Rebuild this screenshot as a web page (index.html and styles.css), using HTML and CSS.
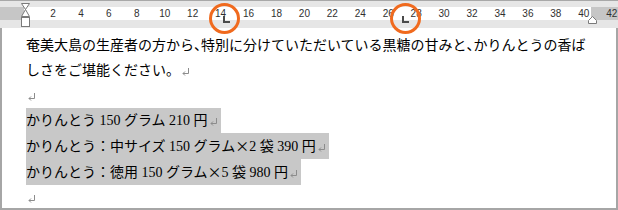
FILE: index.html
```html
<!DOCTYPE html>
<html lang="ja">
<head>
<meta charset="utf-8">
<title>かりんとう</title>
<link rel="stylesheet" href="styles.css">
</head>
<body>
<div class="ruler">
  <div class="ruler-top"></div>
  <div class="ruler-scale">
    <span>2</span><span>4</span><span>6</span><span>8</span><span>10</span><span>12</span><span>14</span><span>16</span><span>18</span><span>20</span><span>22</span><span>24</span><span>26</span><span>28</span><span>30</span><span>32</span><span>34</span><span>36</span><span>38</span><span>40</span><span>42</span>
  </div>
  <div class="ruler-bottom"></div>
  <svg class="indent-left" width="11" height="25" viewBox="0 0 11 25">
    <path d="M1.5 0.5 H9.5 L5.5 6.5 Z M5.5 6.5 L9.5 13.5 H1.5 Z" fill="#fff" stroke="#7a7a7a"/>
    <rect x="1.5" y="14.5" width="8" height="9" fill="#fff" stroke="#7a7a7a"/>
  </svg>
  <svg class="indent-right" width="11" height="8" viewBox="0 0 11 8">
    <path d="M1.5 7.5 V4.5 L5.5 0.5 L9.5 4.5 V7.5 Z" fill="#fff" stroke="#7a7a7a"/>
  </svg>
  <span class="tab tab-1"></span>
  <span class="tab tab-2"></span>
  <span class="callout callout-1"></span>
  <span class="callout callout-2"></span>
</div>
<div class="page">
  <p>奄美大島の生産者の方から<span class="half">、</span>特別に分けていただいている黒糖の甘みと<span class="half">、</span>かりんとうの香ば<br>しさをご堪能ください。<svg class="pm" width="8" height="8" viewBox="0 0 8 8"><path d="M6.5 0 V5.5 H1 M3 3.5 L1 5.5 L3 7.5" fill="none" stroke="#8c8c8c"/></svg></p>
  <p><svg class="pm" width="8" height="8" viewBox="0 0 8 8"><path d="M6.5 0 V5.5 H1 M3 3.5 L1 5.5 L3 7.5" fill="none" stroke="#8c8c8c"/></svg></p>
  <p class="sel">かりんとう 150 グラム 210 円<svg class="pm" width="8" height="8" viewBox="0 0 8 8"><path d="M6.5 0 V5.5 H1 M3 3.5 L1 5.5 L3 7.5" fill="none" stroke="#8c8c8c"/></svg></p>
  <p class="sel">かりんとう：中サイズ 150 グラム<span class="cjk">×</span>2 袋 390 円<svg class="pm" width="8" height="8" viewBox="0 0 8 8"><path d="M6.5 0 V5.5 H1 M3 3.5 L1 5.5 L3 7.5" fill="none" stroke="#8c8c8c"/></svg></p>
  <p class="sel">かりんとう：徳用 150 グラム<span class="cjk">×</span>5 袋 980 円<svg class="pm" width="8" height="8" viewBox="0 0 8 8"><path d="M6.5 0 V5.5 H1 M3 3.5 L1 5.5 L3 7.5" fill="none" stroke="#8c8c8c"/></svg></p>
  <p><svg class="pm" width="8" height="8" viewBox="0 0 8 8"><path d="M6.5 0 V5.5 H1 M3 3.5 L1 5.5 L3 7.5" fill="none" stroke="#8c8c8c"/></svg></p>
</div>
</body>
</html>
```

FILE: styles.css
```css
html, body {
  margin: 0;
  padding: 0;
  background: #fff;
}

body {
  width: 618px;
  height: 210px;
  overflow: hidden;
}

.ruler {
  position: relative;
  height: 28px;
}

.ruler-top {
  height: 7px;
  box-sizing: border-box;
  border-top: 1px solid #a8a8a8;
  background: #e6e6e6;
}

.ruler-scale {
  display: flex;
  height: 13px;
  padding-left: 39px;
  overflow: hidden;
  background: linear-gradient(to right, #c6c6c6 0 24px, #fff 24px 591px, #c6c6c6 591px);
  font-family: "Liberation Sans", Arial, sans-serif;
  font-size: 10px;
  line-height: 13px;
  color: #303030;
}

.ruler-scale span {
  flex: 0 0 27.95px;
  text-align: center;
}

.ruler-bottom {
  height: 8px;
  background: #e6e6e6;
}

.indent-left {
  position: absolute;
  left: 20px;
  top: 3px;
}

.indent-right {
  position: absolute;
  left: 587px;
  top: 16px;
}

.tab {
  position: absolute;
  top: 16px;
  width: 7px;
  height: 7px;
  box-sizing: border-box;
  border-left: 2px solid #4a4a4a;
  border-bottom: 2px solid #4a4a4a;
}

.tab-1 { left: 223px; }
.tab-2 { left: 402px; }

.callout {
  position: absolute;
  top: 3px;
  width: 31px;
  height: 31px;
  box-sizing: border-box;
  border: 3px solid #f06a1e;
  border-radius: 50%;
}

.callout-1 { left: 209px; }
.callout-2 { left: 390px; }

.page {
  height: 182px;
  box-sizing: border-box;
  border: 2px solid #a6a6a6;
  border-top: 0;
  padding: 5px 0 0 24px;
  font-family: "Liberation Serif", "Noto Sans CJK JP", serif;
  font-size: 14px;
  line-height: 25px;
  color: #000;
}

.page p {
  margin: 0;
  white-space: nowrap;
}

.half {
  font-feature-settings: "halt";
}

.cjk {
  font-family: "Noto Sans CJK JP", sans-serif;
  font-feature-settings: "fwid";
}

.sel {
  width: fit-content;
  padding-right: 3px;
  background: #c8c8c8;
}

.pm {
  margin-left: 2px;
  vertical-align: -1px;
}
```
